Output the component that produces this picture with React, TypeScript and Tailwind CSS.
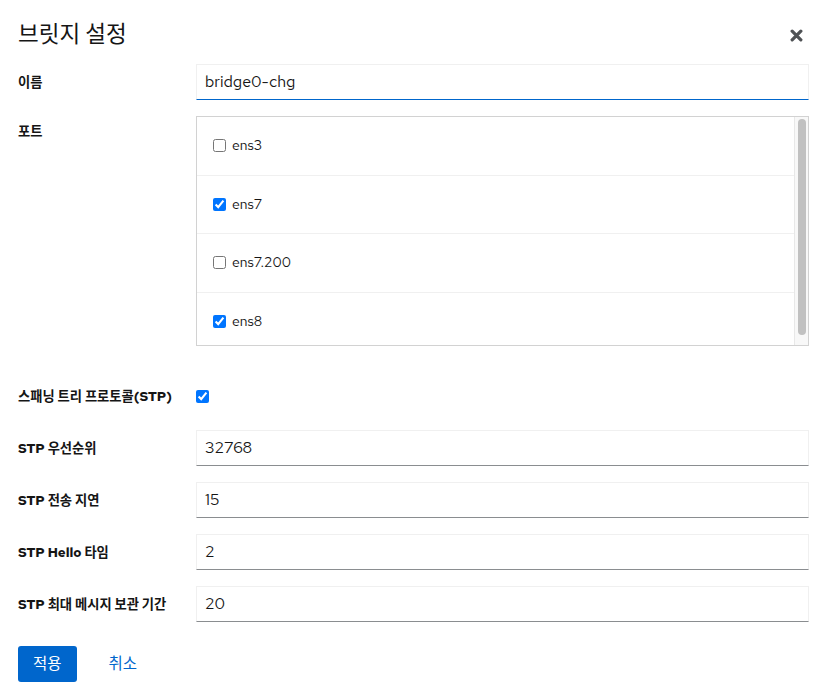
import React from "react";

const font = {
  fontFamily: '"Red Hat Text", "Noto Sans", "Noto Sans CJK KR", sans-serif',
};

function Label({ children, className = "" }: { children: React.ReactNode; className?: string }) {
  return (
    <div className={"text-[13.3px] font-bold text-[#151515] leading-[21px] " + className}>{children}</div>
  );
}

function TextInput({ value, focused = false }: { value: string; focused?: boolean }) {
  return (
    <div
      className={
        "h-[36px] flex items-center pl-[8px] text-[16px] text-[#151515] border border-[#f0f0f0] " +
        (focused ? "border-b-[#0066cc]" : "border-b-[#8a8d90]")
      }
    >
      {value}
    </div>
  );
}

function PortRow({ name, checked, last = false }: { name: string; checked: boolean; last?: boolean }) {
  return (
    <div className={"h-[58.5px] shrink-0 flex items-center pl-[16px] gap-[6px] " + (last ? "" : "border-b border-[#f0f0f0]")}>
      <input type="checkbox" defaultChecked={checked} className="w-[13px] h-[13px] m-0" />
      <span className="text-[14px] text-[#151515]">{name}</span>
    </div>
  );
}

export default function App() {
  return (
    <div className="w-[826px] h-[697px] bg-white pl-[18px] pr-[17px]" style={font}>
      <div className="flex items-center justify-between pt-[17px] mb-[13px]">
        <h1 className="text-[22.5px] leading-[34px] font-normal text-[#151515]">브릿지 설정</h1>
        <svg width="13" height="13" viewBox="0 0 12 12" className="mr-[6px] mt-[2px]">
          <path d="M2 2 L10 10 M10 2 L2 10" stroke="#4f5255" strokeWidth="3" strokeLinecap="round" />
        </svg>
      </div>

      <div className="grid grid-cols-[178px_1fr] gap-y-[16px]">
        <Label className="pt-[8px]">이름</Label>
        <TextInput value="bridge0-chg" focused />

        <Label className="pt-[5px]">포트</Label>
        <div className="h-[230px] border border-[#d2d2d2] flex overflow-hidden">
          <div className="flex-1 flex flex-col overflow-hidden">
            <PortRow name="ens3" checked={false} />
            <PortRow name="ens7" checked />
            <PortRow name="ens7.200" checked={false} />
            <PortRow name="ens8" checked last />
          </div>
          <div className="w-[14px] border-l border-[#e8e8e8] bg-[#f8f8f8] flex justify-center pt-[2px] pb-[10px]">
            <div className="w-[8px] h-full rounded-[4px] bg-[#c1c1c1]" />
          </div>
        </div>

        <Label className="mt-[16px] h-[36px] flex items-center">스패닝 트리 프로토콜(STP)</Label>
        <div className="mt-[16px] h-[36px] flex items-center">
          <input type="checkbox" defaultChecked className="w-[13px] h-[13px] m-0" />
        </div>

        <Label className="pt-[8px]">STP 우선순위</Label>
        <TextInput value="32768" />

        <Label className="pt-[8px]">STP 전송 지연</Label>
        <TextInput value="15" />

        <Label className="pt-[8px]">STP Hello 타임</Label>
        <TextInput value="2" />

        <Label className="pt-[8px]">STP 최대 메시지 보관 기간</Label>
        <TextInput value="20" />
      </div>

      <div className="flex items-center gap-[16px] mt-[24px]">
        <button className="h-[36px] px-[15px] bg-[#0066cc] text-white text-[15.5px] rounded-[3px]">적용</button>
        <button className="h-[36px] px-[16px] text-[#0066cc] text-[15.5px]">취소</button>
      </div>
    </div>
  );
}
